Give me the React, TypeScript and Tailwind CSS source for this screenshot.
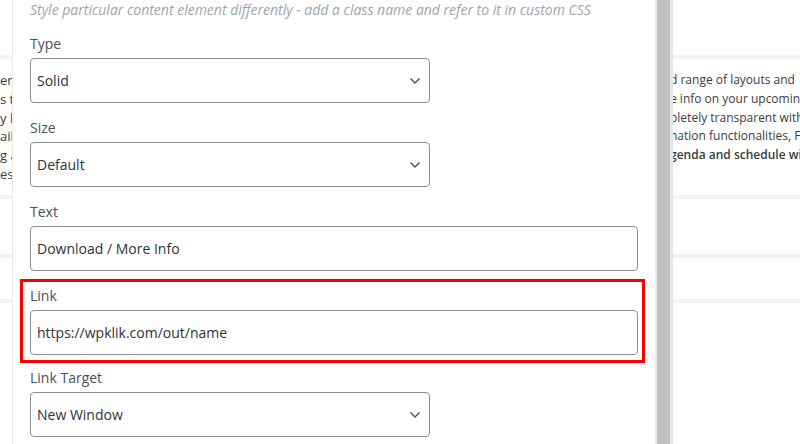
import React from "react";

const font = { fontFamily: '"Open Sans", "Noto Sans", Arial, sans-serif' };

function Chevron() {
  return (
    <svg width="12" height="8" viewBox="0 0 12 8" className="shrink-0">
      <path d="M1.5 1.5 L6 6 L10.5 1.5" fill="none" stroke="#50575e" strokeWidth="1.5" />
    </svg>
  );
}

function SelectField({ label, value }: { label: string; value: string }) {
  return (
    <div className="mb-[15px]">
      <div className="h-[20px] leading-[20px] text-[14px] text-[#4a5158] mb-[4px]">{label}</div>
      <div className="w-[400px] h-[45px] border border-[#8c8f94] rounded-[4px] flex items-center justify-between pl-[6px] pr-[8px]">
        <span className="text-[14px] text-[#2c3338]">{value}</span>
        <Chevron />
      </div>
    </div>
  );
}

function TextField({ label, value }: { label: string; value: string }) {
  return (
    <div>
      <div className="h-[20px] leading-[20px] text-[14px] text-[#4a5158] mb-[4px]">{label}</div>
      <div className="w-[608px] h-[45px] border border-[#8c8f94] rounded-[4px] flex items-center pl-[6px]">
        <span className="text-[14px] text-[#2c3338]">{value}</span>
      </div>
    </div>
  );
}

function Band() {
  return <div className="h-[4px] bg-[#f3f3f3]" />;
}

function Strip({ children }: { children: React.ReactNode }) {
  return (
    <div className="flex flex-col h-full">
      <div className="h-[55px]" />
      <Band />
      <div className="h-[136px] pt-[12px] overflow-hidden">{children}</div>
      <Band />
      <div className="h-[55px]" />
      <Band />
      <div className="h-[41px]" />
      <Band />
      <div className="flex-1" />
    </div>
  );
}

export default function App() {
  const leftLines = ["ems", "s to", "y lis", "ails", "g an", "ese"];
  const rightLines = [
    { t: "d range of layouts and", b: false },
    { t: "e info on your upcoming", b: false },
    { t: "pletely transparent with", b: false },
    { t: "nation functionalities, Fu", b: false },
    { t: "genda and schedule with", b: true },
  ];
  return (
    <div className="w-[800px] h-[444px] overflow-hidden bg-white flex" style={font}>
      {/* left page strip */}
      <div className="w-[12px] h-full overflow-hidden shrink-0">
        <Strip>
          <div className="flex flex-col">
            {leftLines.map((l, i) => (
              <div key={i} className="whitespace-nowrap text-[13px] leading-[18.75px] text-[#3c3c3c]">
                {l}
              </div>
            ))}
          </div>
        </Strip>
      </div>

      {/* modal panel */}
      <div className="w-[643px] h-full shrink-0 bg-white border-l border-[#ececec] pl-[17px]">
        <div className="h-[20px] leading-[20px] text-[14px] italic text-[#a0a5aa] whitespace-nowrap mb-[14px]">
          Style particular content element differently - add a class name and refer to it in custom CSS
        </div>
        <SelectField label="Type" value="Solid" />
        <SelectField label="Size" value="Default" />
        <div className="mb-[8px]">
          <TextField label="Text" value="Download / More Info" />
        </div>
        <div className="ml-[-10px] border-[3px] border-[#ff0000] pl-[7px] pt-[4px] pb-[5px] mb-[5px] w-[625px]">
          <TextField label="Link" value="https://wpklik.com/out/name" />
        </div>
        <SelectField label="Link Target" value="New Window" />
      </div>

      {/* scrollbar */}
      <div className="w-[18px] h-full shrink-0 bg-[#ececec] flex">
        <div className="ml-[2px] w-[13px] h-full bg-[#c1c1c1]" />
        <div className="w-[3px] h-full bg-[#e6e6e6]" />
      </div>

      {/* right page strip */}
      <div className="flex-1 h-full overflow-hidden">
        <Strip>
          <div className="ml-[-3px]">
            {rightLines.map((l, i) => (
              <div
                key={i}
                className={
                  "whitespace-nowrap text-[12px] leading-[18.75px] text-[#3c3c3c] " +
                  (l.b ? "font-semibold" : "font-normal")
                }
              >
                {l.t}
              </div>
            ))}
          </div>
        </Strip>
      </div>
    </div>
  );
}
